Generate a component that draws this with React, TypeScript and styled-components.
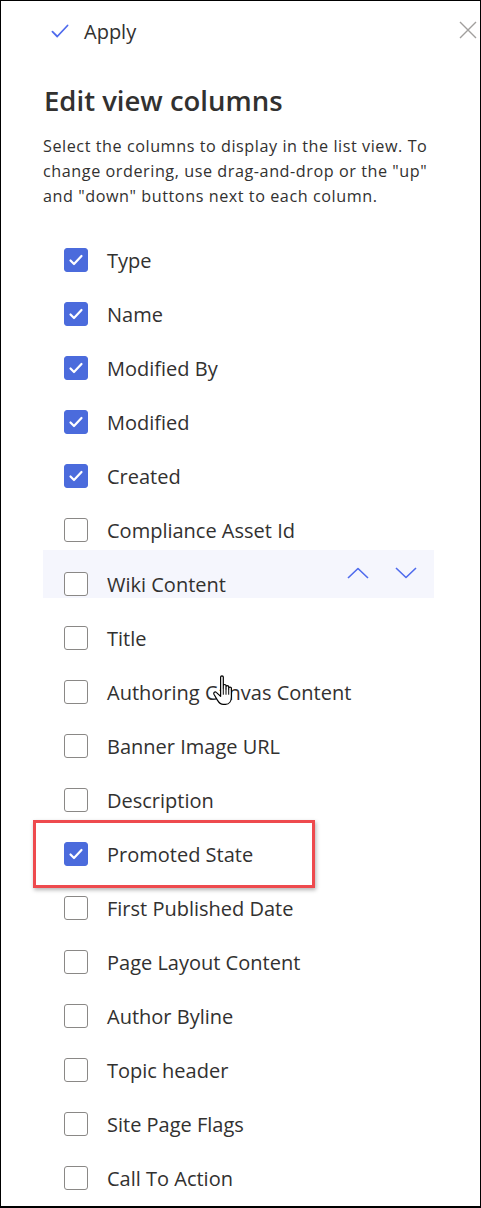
import React from 'react';
import styled, { createGlobalStyle } from 'styled-components';

const GlobalStyle = createGlobalStyle`
  html, body {
    margin: 0;
    padding: 0;
    background: #ffffff;
  }
  body {
    font-family: 'Open Sans', 'Noto Sans', sans-serif;
    color: #323130;
  }
`;

interface Column {
  name: string;
  checked: boolean;
  hovered?: boolean;
  flagged?: boolean;
}

const columns: Column[] = [
  { name: 'Type', checked: true },
  { name: 'Name', checked: true },
  { name: 'Modified By', checked: true },
  { name: 'Modified', checked: true },
  { name: 'Created', checked: true },
  { name: 'Compliance Asset Id', checked: false },
  { name: 'Wiki Content', checked: false, hovered: true },
  { name: 'Title', checked: false },
  { name: 'Authoring Canvas Content', checked: false },
  { name: 'Banner Image URL', checked: false },
  { name: 'Description', checked: false },
  { name: 'Promoted State', checked: true, flagged: true },
  { name: 'First Published Date', checked: false },
  { name: 'Page Layout Content', checked: false },
  { name: 'Author Byline', checked: false },
  { name: 'Topic header', checked: false },
  { name: 'Site Page Flags', checked: false },
  { name: 'Call To Action', checked: false },
];

const Frame = styled.div`
  position: relative;
  box-sizing: border-box;
  width: 481px;
  height: 1208px;
  border: 1px solid #000;
  border-bottom-width: 2px;
  overflow: hidden;
  background: #fff;
`;

const TopBar = styled.div`
  display: flex;
  align-items: center;
  justify-content: space-between;
  height: 60px;
  padding: 0 2px 0 48px;
`;

const ApplyButton = styled.button`
  display: flex;
  align-items: center;
  gap: 13px;
  border: none;
  background: none;
  padding: 0;
  font-family: inherit;
  font-size: 20px;
  color: #323130;
  cursor: pointer;
`;

const CloseButton = styled.button`
  display: flex;
  border: none;
  background: none;
  padding: 0;
  margin-top: -2px;
  cursor: pointer;
`;

const Body = styled.div`
  padding: 0 46px 0 42px;
`;

const Title = styled.h2`
  margin: 20px 0 0 1px;
  font-size: 27.5px;
  font-weight: 600;
  line-height: 40px;
  color: #323130;
`;

const Description = styled.p`
  margin: 13px 0 0 0;
  font-size: 16.2px;
  letter-spacing: 0.55px;
  line-height: 25px;
  color: #323130;
`;

const List = styled.div`
  display: flex;
  flex-direction: column;
  margin-top: 24px;
`;

const Row = styled.div<{ $hovered?: boolean }>`
  position: relative;
  display: flex;
  align-items: center;
  height: 54px;
  padding: 0 17px 0 21px;

  &::before {
    content: '';
    display: ${(p) => (p.$hovered ? 'block' : 'none')};
    position: absolute;
    left: 0;
    right: 0;
    top: -7px;
    height: 48px;
    background: #f5f6fd;
  }
`;

const Box = styled.span<{ $checked: boolean }>`
  position: relative;
  display: flex;
  align-items: center;
  justify-content: center;
  box-sizing: border-box;
  width: 24px;
  height: 24px;
  border-radius: 3px;
  border: 1px solid ${(p) => (p.$checked ? '#4b6bdc' : '#8a8886')};
  background: ${(p) => (p.$checked ? '#4b6bdc' : '#fff')};
  flex-shrink: 0;
`;

const Label = styled.span`
  position: relative;
  margin-left: 19px;
  font-size: 20px;
  color: #323130;
  white-space: nowrap;
`;

const Arrows = styled.div`
  position: relative;
  display: flex;
  gap: 26px;
  margin-left: auto;
  margin-top: -22px;
`;

const ArrowButton = styled.button`
  display: flex;
  border: none;
  background: none;
  padding: 0;
  cursor: pointer;
`;

const Highlight = styled.div`
  position: absolute;
  left: -10px;
  top: -7px;
  box-sizing: border-box;
  width: 282px;
  height: 68px;
  border: 3px solid #ee4a4e;
  box-shadow: 1px 2px 4px rgba(0, 0, 0, 0.3);
  pointer-events: none;
`;

const Cursor = styled.svg`
  position: absolute;
  left: 211px;
  top: 673px;
  pointer-events: none;
`;

const CheckIcon = ({ color, size, width }: { color: string; size: number; width: number }) => (
  <svg width={size} height={size} viewBox="0 0 16 16" fill="none">
    <path d="M2.5 8.5 L6 12 L13.5 4" stroke={color} strokeWidth={width} strokeLinecap="round" strokeLinejoin="round" />
  </svg>
);

const Chevron = ({ up }: { up?: boolean }) => (
  <svg width="22" height="12" viewBox="0 0 22 12" fill="none">
    <path
      d={up ? 'M1 11 L11 1.5 L21 11' : 'M1 1 L11 10.5 L21 1'}
      stroke="#4f6bed"
      strokeWidth="1.6"
      strokeLinejoin="round"
    />
  </svg>
);

export default function App() {
  return (
    <>
      <GlobalStyle />
      <Frame>
        <TopBar>
          <ApplyButton>
            <CheckIcon color="#4f6bed" size={22} width={1.3} />
            Apply
          </ApplyButton>
          <CloseButton aria-label="Close">
            <svg width="20" height="20" viewBox="0 0 20 20">
              <path d="M2 2 L18 18 M18 2 L2 18" stroke="#a19f9d" strokeWidth="1.4" />
            </svg>
          </CloseButton>
        </TopBar>
        <Body>
          <Title>Edit view columns</Title>
          <Description>
            Select the columns to display in the list view. To change ordering, use drag-and-drop or the
            "up" and "down" buttons next to each column.
          </Description>
          <List>
            {columns.map((col) => (
              <Row key={col.name} $hovered={col.hovered}>
                <Box $checked={col.checked}>
                  {col.checked && <CheckIcon color="#fff" size={16} width={2.2} />}
                </Box>
                <Label>{col.name}</Label>
                {col.hovered && (
                  <Arrows>
                    <ArrowButton aria-label="Move up">
                      <Chevron up />
                    </ArrowButton>
                    <ArrowButton aria-label="Move down">
                      <Chevron />
                    </ArrowButton>
                  </Arrows>
                )}
                {col.flagged && <Highlight />}
              </Row>
            ))}
          </List>
        </Body>
        <Cursor width="28" height="35" viewBox="0 0 26 32">
          <path
            d="M8 2.5 C8 1.2 10.5 1.2 10.5 2.5 L10.5 13 L10.5 10.5 C10.5 9.2 13 9.2 13 10.5 L13 13.5 L13 11.5 C13 10.2 15.5 10.2 15.5 11.5 L15.5 14 L15.5 12.8 C15.5 11.6 18 11.6 18 12.8 L18 21 C18 25 16 28 12.5 28 L10.5 28 C8 28 6.5 26.5 5 24 L1.8 18.5 C1 17 2.8 15.6 4 16.8 L8 20.5 Z"
            fill="#fff"
            stroke="#000"
            strokeWidth="1.1"
            strokeLinejoin="round"
          />
          <path d="M10.5 13 L10.5 19 M13 13.5 L13 19 M15.5 14 L15.5 19" stroke="#000" strokeWidth="0.9" />
        </Cursor>
      </Frame>
    </>
  );
}
